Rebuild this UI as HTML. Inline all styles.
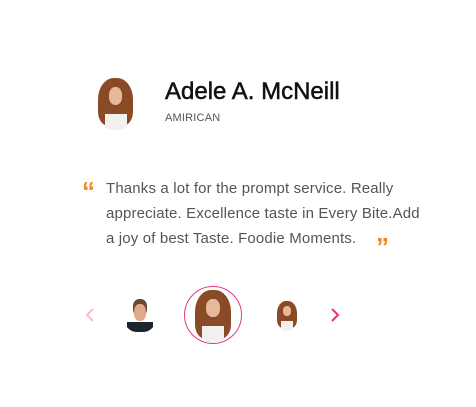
<!DOCTYPE html>
<html><head><style>
body{margin:0;width:476px;height:407px;background:#fff;position:relative;font-family:"Liberation Sans",sans-serif;overflow:hidden}
.a{position:absolute;border-radius:50%;overflow:hidden;background:#fff}
.w{position:absolute;left:0;right:0;bottom:0;height:30%;background:#f3f1f0}
.h{position:absolute;left:18%;right:18%;top:6%;bottom:8%;border-radius:45% 45% 30% 30%;background:#8a4a26}
.f{position:absolute;left:38%;width:24%;top:22%;height:32%;border-radius:45%;background:#e8b89a}
.q{position:absolute;color:#f08a1e;font-family:"Liberation Sans",sans-serif;font-weight:bold;font-size:26px;line-height:26px}
</style></head><body>
<div class="a" style="left:88px;top:75px;width:55px;height:55px"><div class="h"></div><div class="w" style="left:30%;right:30%"></div><div class="f"></div></div>
<div style="position:absolute;left:165px;top:78px;font-size:24px;color:#111;-webkit-text-stroke:0.5px #111">Adele A. McNeill</div>
<div style="position:absolute;left:165px;top:112px;font-size:11px;color:#555;letter-spacing:.2px">AMIRICAN</div>
<div class="q" style="left:82px;top:178px">“</div>
<div style="position:absolute;left:106px;top:176px;width:323px;font-size:15px;line-height:25px;color:#555;letter-spacing:0.15px">Thanks a lot for the prompt service. Really appreciate. Excellence taste in Every Bite.Add a joy of best Taste. Foodie Moments.</div>
<div class="q" style="left:376px;top:234px">”</div>
<svg style="position:absolute;left:84px;top:307px" width="12" height="16"><path d="M9 2L3 8L9 14" stroke="#f8b9d8" stroke-width="2" fill="none"/></svg>
<div class="a" style="left:124px;top:298px;width:32px;height:34px;border-radius:40%"><div class="w" style="background:#1e2530;left:10%;right:10%"></div><div class="h" style="background:#6b4a30;left:28%;right:28%;top:4%;bottom:50%"></div><div class="f" style="left:32%;width:36%;top:18%;height:50%;background:#e0a98a"></div></div>
<div class="a" style="left:184px;top:286px;width:56px;height:56px;border:1.5px solid #e6368a"><div class="h"></div><div class="w" style="left:30%;right:30%"></div><div class="f"></div></div>
<div class="a" style="left:272px;top:299px;width:30px;height:32px"><div class="h"></div><div class="w" style="left:30%;right:30%"></div><div class="f"></div></div>
<svg style="position:absolute;left:329px;top:307px" width="12" height="16"><path d="M3 2L9 8L3 14" stroke="#e6317f" stroke-width="2" fill="none"/></svg>
</body></html>
